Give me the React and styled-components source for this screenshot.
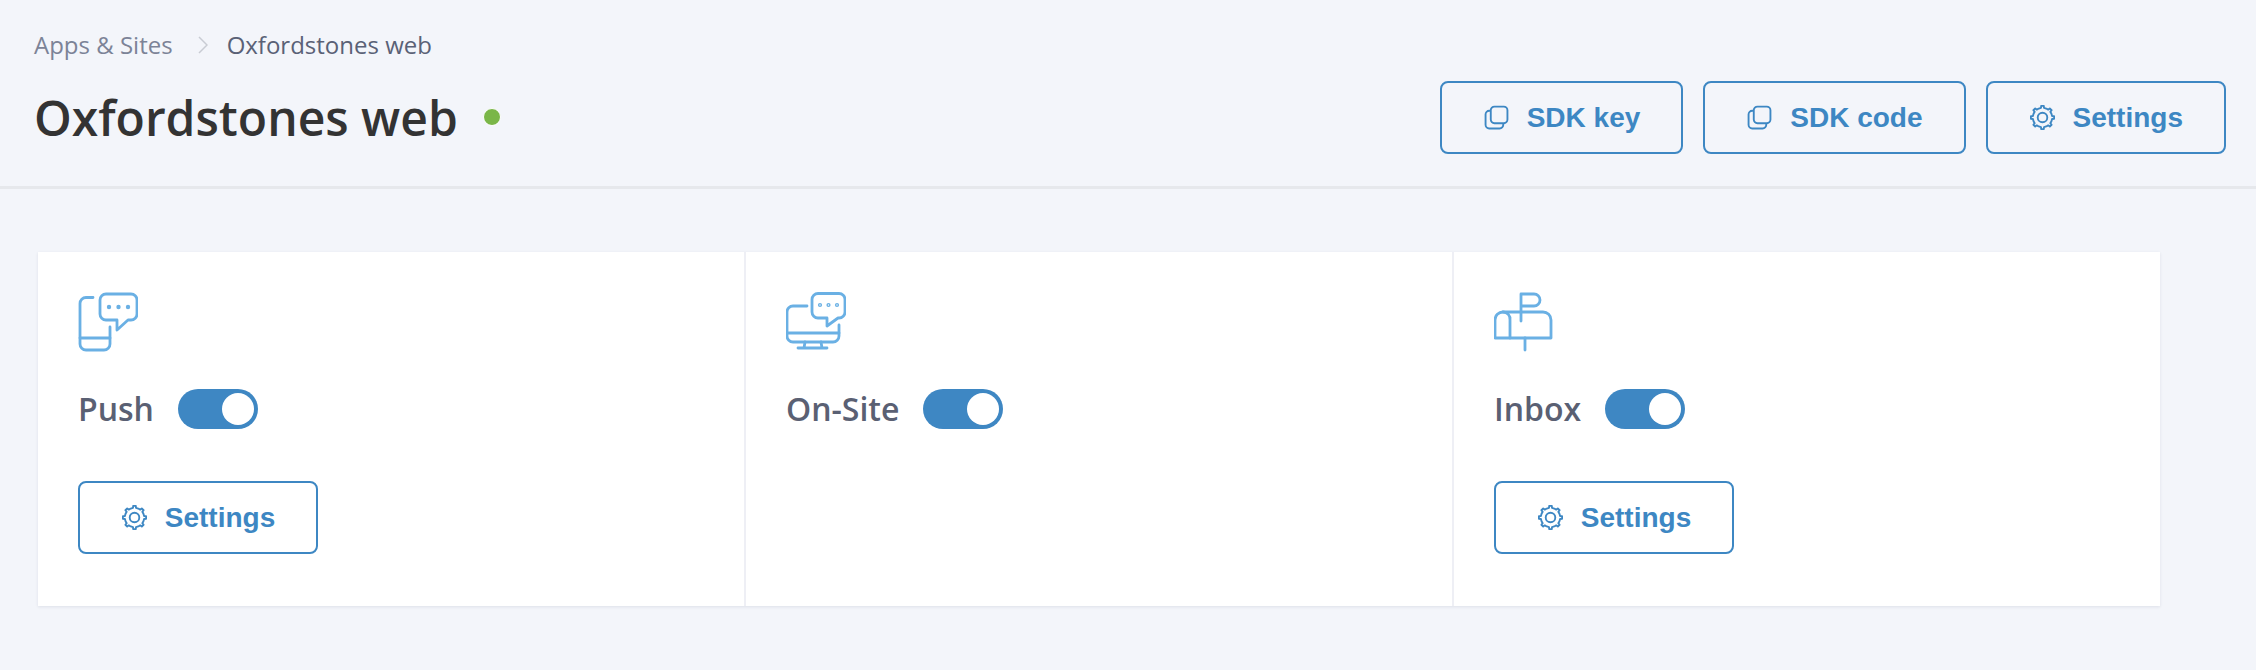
import React from "react";
import styled, { createGlobalStyle } from "styled-components";

const gearPath = (() => {
  // 8 teeth gear outline, drawn around the middle of a 24 box
  const pts = [];
  const teeth = 8;
  for (let i = 0; i < teeth; i++) {
    const a = (i / teeth) * Math.PI * 2 - Math.PI / 2;
    const s = (Math.PI * 2) / teeth;
    [
      [a - s * 0.5, 9.3],
      [a - s * 0.2, 9.3],
      [a - s * 0.14, 11.2],
      [a + s * 0.14, 11.2],
      [a + s * 0.2, 9.3],
    ].forEach(([t, r]) =>
      pts.push(`${(12 + Math.cos(t) * r).toFixed(2)} ${(12 + Math.sin(t) * r).toFixed(2)}`)
    );
  }
  return `M${pts.join("L")}Z`;
})();

const GearIcon = () => (
  <SmallIcon viewBox="0 0 24 24">
    <path d={gearPath} strokeLinejoin="round" />
    <circle cx="12" cy="12" r="4.6" />
  </SmallIcon>
);

const CopyIcon = () => (
  <SmallIcon viewBox="0 0 24 24">
    <rect x="6.5" y="1.5" width="16" height="16" rx="3.5" />
    <path d="M6.5 5.5 H5 a3.5 3.5 0 0 0 -3.5 3.5 V19 a3.5 3.5 0 0 0 3.5 3.5 H15 a3.5 3.5 0 0 0 3.5 -3.5 V17.5" />
  </SmallIcon>
);

const PushIcon = () => (
  <ChannelIcon viewBox="0 0 60 60">
    <path d="M15 5.5 H8 a6 6 0 0 0 -6 6 V52 a6 6 0 0 0 6 6 H26 a6 6 0 0 0 6 -6 V35" />
    <path d="M2 46 H32" />
    <path d="M28 2 H53 a6 6 0 0 1 6 6 V22 a6 6 0 0 1 -6 6 H50 L39 38 V28 H28 a6 6 0 0 1 -6 -6 V8 a6 6 0 0 1 6 -6 Z" />
    <Dot cx="31" cy="15" r="2.2" />
    <Dot cx="40.5" cy="15" r="2.2" />
    <Dot cx="50" cy="15" r="2.2" />
  </ChannelIcon>
);

const OnSiteIcon = () => (
  <ChannelIcon viewBox="0 0 60 60">
    <path d="M21 14 H7 a6 6 0 0 0 -6 6 V44 a6 6 0 0 0 6 6 H47 a6 6 0 0 0 6 -6 V33" />
    <path d="M1 41 H53" />
    <path d="M19 50 L18 56 M35 50 L36 56 M12 56 H41" />
    <path d="M32 1.5 H53 a6 6 0 0 1 6 6 V20 a6 6 0 0 1 -6 6 H52 L41 34 V26 H32 a6 6 0 0 1 -6 -6 V7.5 a6 6 0 0 1 6 -6 Z" />
    <RingDot cx="34" cy="13" r="1.4" />
    <RingDot cx="42.5" cy="13" r="1.4" />
    <RingDot cx="51" cy="13" r="1.4" />
  </ChannelIcon>
);

const InboxIcon = () => (
  <ChannelIcon viewBox="0 0 60 60">
    <path d="M27 20 H49 a8 8 0 0 1 8 8 V46 H1 V28 a8 8 0 0 1 8 -8 H27" />
    <path d="M9 20 a7 7 0 0 1 7 8 V46" />
    <path d="M31 46 V58" />
    <path d="M27 29 V2 H40 a6 6 0 0 1 0 12 H27" />
  </ChannelIcon>
);

const channels = [
  { name: "Push", icon: <PushIcon />, settings: true },
  { name: "On-Site", icon: <OnSiteIcon />, settings: false },
  { name: "Inbox", icon: <InboxIcon />, settings: true },
];

const App = () => {
  return (
    <Page>
      <GlobalStyle />
      <Header>
        <Breadcrumbs>
          <Crumb>Apps &amp; Sites</Crumb>
          <Chevron viewBox="0 0 10 18">
            <path d="M1 1 L9 9 L1 17" />
          </Chevron>
          <Crumb $current>Oxfordstones web</Crumb>
        </Breadcrumbs>
        <TitleRow>
          <TitleGroup>
            <Title>Oxfordstones web</Title>
            <StatusDot />
          </TitleGroup>
          <Actions>
            <Button>
              <CopyIcon />
              SDK key
            </Button>
            <Button>
              <CopyIcon />
              SDK code
            </Button>
            <Button>
              <GearIcon />
              Settings
            </Button>
          </Actions>
        </TitleRow>
      </Header>
      <Content>
        <Cards>
          {channels.map((c) => (
            <Card key={c.name}>
              {c.icon}
              <LabelRow>
                <Label>{c.name}</Label>
                <Toggle />
              </LabelRow>
              {c.settings && (
                <CardButton>
                  <GearIcon />
                  Settings
                </CardButton>
              )}
            </Card>
          ))}
        </Cards>
      </Content>
    </Page>
  );
};

const GlobalStyle = createGlobalStyle`
  html, body {
    margin: 0;
    padding: 0;
    background: #f3f5fa;
  }
`;

const Page = styled.div`
  min-height: 670px;
  background: #f3f5fa;
  font-family: "Open Sans", "Noto Sans", sans-serif;
`;

const Header = styled.header`
  height: 189px;
  box-sizing: border-box;
  padding: 29px 30px 0 34px;
  border-bottom: 3px solid #e6e8ec;
`;

const Breadcrumbs = styled.nav`
  display: flex;
  align-items: center;
  height: 32px;
`;

const Crumb = styled.span`
  font-size: 24px;
  line-height: 32px;
  color: ${(p) => (p.$current ? "#5a6176" : "#7c8397")};
`;

const Chevron = styled.svg`
  width: 10px;
  height: 18px;
  margin: 0 19px 0 25px;
  fill: none;
  stroke: #c9ccd3;
  stroke-width: 1.5;
`;

const TitleRow = styled.div`
  display: flex;
  align-items: center;
  justify-content: space-between;
  margin-top: 20px;
`;

const TitleGroup = styled.div`
  display: flex;
  align-items: center;
`;

const Title = styled.h1`
  margin: 0;
  font-size: 48px;
  line-height: 73px;
  font-weight: 600;
  color: #333333;
`;

const StatusDot = styled.span`
  width: 16px;
  height: 16px;
  margin-left: 25px;
  margin-top: -1px;
  border: 1px solid #ffffff;
  border-radius: 50%;
  background: #7ab648;
`;

const Actions = styled.div`
  display: flex;
  gap: 20px;
`;

const Button = styled.button`
  display: flex;
  align-items: center;
  justify-content: center;
  gap: 18px;
  height: 73px;
  box-sizing: border-box;
  padding: 0 41px 0 42px;
  border: 2.5px solid #3d87c3;
  border-radius: 8px;
  background: transparent;
  color: #3d87c3;
  font-family: "Liberation Sans", Arial, sans-serif;
  font-size: 28px;
  font-weight: 700;
`;

const CardButton = styled(Button)`
  width: 240px;
  margin-top: 52px;
`;

const SmallIcon = styled.svg`
  width: 25px;
  height: 25px;
  flex: none;
  fill: none;
  stroke: #3d87c3;
  stroke-width: 1.8;
`;

const Content = styled.main`
  padding: 63px 96px 0 38px;
`;

const Cards = styled.section`
  display: grid;
  grid-template-columns: 708px 708px 1fr;
  background: #ffffff;
  box-shadow: 0 1px 3px rgba(40, 50, 80, 0.1);
`;

const Card = styled.article`
  box-sizing: border-box;
  height: 354px;
  padding: 40px;
  border-right: 2px solid #eeeff5;

  &:last-child {
    border-right: 0;
  }
`;

const ChannelIcon = styled.svg`
  display: block;
  width: 60px;
  height: 60px;
  fill: none;
  stroke: #6ab0e4;
  stroke-width: 2.8;
  stroke-linecap: round;
  stroke-linejoin: round;
`;

const Dot = styled.circle`
  fill: #6ab0e4;
  stroke: none;
`;

const RingDot = styled.circle`
  stroke-width: 1.4;
`;

const LabelRow = styled.div`
  display: flex;
  align-items: center;
  gap: 24px;
  margin-top: 37px;
`;

const Label = styled.span`
  font-size: 32px;
  line-height: 40px;
  font-weight: 600;
  color: #5a6073;
`;

const Toggle = styled.span`
  display: flex;
  justify-content: flex-end;
  align-items: center;
  width: 80px;
  height: 40px;
  box-sizing: border-box;
  padding: 4px;
  border-radius: 20px;
  background: #3e87c3;

  &::after {
    content: "";
    width: 32px;
    height: 32px;
    border-radius: 50%;
    background: #ffffff;
  }
`;

export default App;
